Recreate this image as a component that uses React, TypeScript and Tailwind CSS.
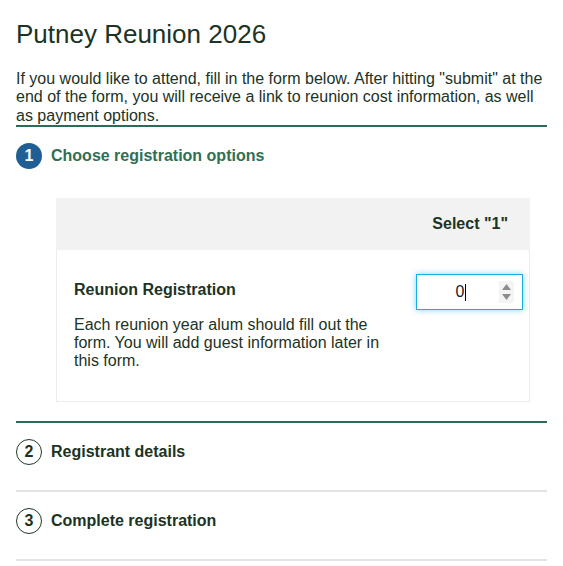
// Putney Reunion 2026 — registration form, step 1 open

const steps = [
  { n: 2, label: 'Registrant details' },
  { n: 3, label: 'Complete registration' },
];

function NumberField({ value }: { value: string }) {
  return (
    <div className="relative w-[107px] h-[36px] border border-[#19ade6] bg-white shadow-[0_0_6px_rgba(25,173,230,0.55)] flex items-center">
      <div className="flex-1 flex items-center justify-center pl-[6px] text-base text-[#1b1b1b]">
        <span>{value}</span>
        <span className="w-px h-[17px] bg-black ml-[1px]" />
      </div>
      <div className="w-[15px] h-[22px] mr-[8px] bg-[#f4f4f4] flex flex-col items-center justify-center gap-[4px]">
        <svg width="9" height="6" viewBox="0 0 9 6"><path d="M4.5 0 L9 6 L0 6 Z" fill="#8c8c8c" /></svg>
        <svg width="9" height="6" viewBox="0 0 9 6"><path d="M0 0 L9 0 L4.5 6 Z" fill="#8c8c8c" /></svg>
      </div>
    </div>
  );
}

export default function App() {
  return (
    <div className="w-[563px] h-[566px] overflow-hidden bg-white font-['Liberation_Sans',Arial,sans-serif] text-[#1c3325]">
      <div className="px-4">
        <h1 className="pt-[19px] text-[26px] leading-[30px]">Putney Reunion 2026</h1>
        <p className="mt-[21px] text-base leading-[18.4px] border-b-2 border-[#2c6b55]">
          If you would like to attend, fill in the form below. After hitting "submit" at the end of the form, you will receive a link to reunion cost information, as well as payment options.
        </p>

        {/* ─── Step 1 (open) ─── */}
        <div className="pt-4 flex items-center gap-[9px]">
          <div className="w-[26px] h-[26px] rounded-full bg-[#1f5f96] text-white font-bold text-base flex items-center justify-center">1</div>
          <span className="font-bold text-base text-[#2f6f54]">Choose registration options</span>
        </div>

        <div className="mt-[29px] ml-10 w-[474px]">
          <div className="h-[52px] bg-[#f2f2f2] flex items-center justify-end pr-[22px] font-bold text-base">
            Select "1"
          </div>
          <div className="h-[152px] border-x border-b border-[#ececec] flex">
            <div className="flex-1 pl-[17px] pt-[31px]">
              <div className="font-bold text-base leading-[18.4px]">Reunion Registration</div>
              <p className="mt-4 w-[320px] text-base leading-[18.4px]">
                Each reunion year alum should fill out the form. You will add guest information later in this form.
              </p>
            </div>
            <div className="pt-[24px] pr-[6px]">
              <NumberField value="0" />
            </div>
          </div>
        </div>

        {/* ─── Collapsed steps ─── */}
        <div className="mt-[19px] border-t-2 border-[#2c6b55]">
          {steps.map((s) => (
            <div key={s.n} className="pt-4 pb-[25px] border-b-2 border-[#e3e3e3] flex items-center gap-[9px]">
              <div className="w-[26px] h-[26px] rounded-full border border-[#1f3a2a] font-bold text-base flex items-center justify-center">{s.n}</div>
              <span className="font-bold text-base">{s.label}</span>
            </div>
          ))}
        </div>
      </div>
    </div>
  );
}
